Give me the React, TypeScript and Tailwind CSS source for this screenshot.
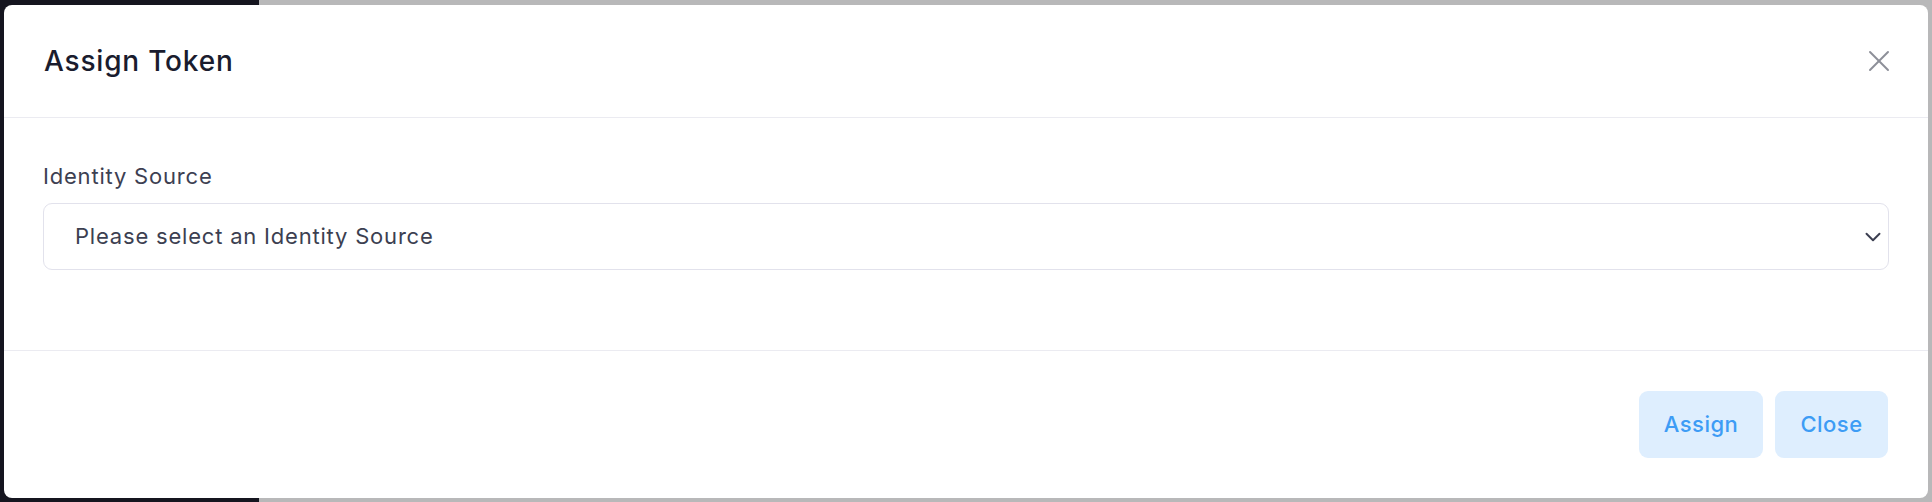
import { X, ChevronDown } from "lucide-react";

export default function App() {
  return (
    <div
      className="relative h-[502px] w-[1932px] overflow-hidden"
      style={{ fontFamily: "Inter, 'Noto Sans', sans-serif" }}
    >
      {/* BACKDROP */}
      <div className="flex h-full">
        <div className="w-[259px] bg-[#15151f]" />
        <div className="flex-1 bg-[#b8b8b9]" />
      </div>

      {/* MODAL */}
      <div className="absolute left-[4px] top-[5px] flex h-[493px] w-[1924px] flex-col rounded-[8px] bg-white">
        <div className="flex h-[113px] items-center justify-between border-b border-[#ebebf1] pl-[40px] pr-[31px]">
          <h2 className="text-[28px] font-medium tracking-[0.8px] text-[#1a1c2e]">Assign Token</h2>
          <X className="h-[36px] w-[36px] text-[#8d8f98]" strokeWidth={1.3} />
        </div>

        <div className="flex h-[233px] flex-col border-b border-[#ebebf1] px-[39px] pt-[45px]">
          <label className="text-[22px] leading-[26px] tracking-[0.8px] text-[#3d4052]">Identity Source</label>
          <div className="mt-[14px] flex h-[67px] items-center justify-between rounded-[9px] border border-[#e2e2ec] pl-[31px] pr-[2px]">
            <span className="text-[22px] tracking-[0.8px] text-[#3c3f51]">Please select an Identity Source</span>
            <ChevronDown className="h-[26px] w-[26px] text-[#3c3f51]" strokeWidth={1.8} />
          </div>
        </div>

        <div className="flex flex-1 items-start justify-end gap-[12px] px-[40px] pt-[40px]">
          <button className="h-[67px] w-[124px] rounded-[9px] bg-[#deeefe] text-[22px] font-medium tracking-[0.5px] text-[#3d9cf5]">
            Assign
          </button>
          <button className="h-[67px] w-[113px] rounded-[9px] bg-[#deeefe] text-[22px] font-medium tracking-[0.5px] text-[#3d9cf5]">
            Close
          </button>
        </div>
      </div>
    </div>
  );
}
